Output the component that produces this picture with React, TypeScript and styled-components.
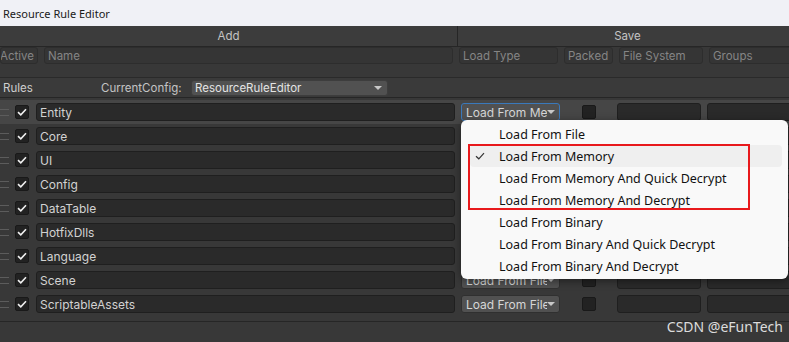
import React from 'react';
import styled, { createGlobalStyle } from 'styled-components';

const GlobalStyle = createGlobalStyle`
  html, body {
    margin: 0;
    padding: 0;
    background: #383838;
  }
`;

const Window = styled.div`
  width: 789px;
  height: 342px;
  display: flex;
  flex-direction: column;
  overflow: hidden;
  font-family: Inter, "Noto Sans", sans-serif;
`;

const TitleBar = styled.div`
  height: 26px;
  flex: none;
  display: flex;
  align-items: center;
  padding-left: 3px;
  background: #f0f1f6;
  color: #1a1a1a;
  font-family: "Noto Sans", "Liberation Sans", sans-serif;
  font-size: 11px;
`;

const Editor = styled.div`
  position: relative;
  flex: 1;
  display: flex;
  flex-direction: column;
  background: #383838;
  color: #c8c8c8;
  font-size: 11.5px;
`;

const GroupHeader = styled.div`
  height: 20px;
  flex: none;
  display: grid;
  grid-template-columns: 458px 1fr;
  background: #3c3c3c;
  border-bottom: 1px solid #262626;
`;

const GroupCell = styled.div<{ $divider?: boolean }>`
  display: flex;
  align-items: center;
  justify-content: center;
  color: #c4c4c4;
  border-right: ${(p) => (p.$divider ? '1px solid #262626' : 'none')};
  padding-left: ${(p) => (p.$divider ? '0' : '8px')};
`;

const ColumnHeader = styled.div`
  height: 17px;
  flex: none;
  display: grid;
  grid-template-columns: 38px 409px 99px 49px 84px 90px;
  column-gap: 6px;
`;

const ColumnLabel = styled.div<{ $right?: boolean }>`
  display: flex;
  align-items: center;
  justify-content: ${(p) => (p.$right ? 'flex-end' : 'flex-start')};
  padding: 0 3px;
  overflow: hidden;
  white-space: nowrap;
  background: #353535;
  border: 1px solid #2d2d2d;
  border-radius: 3px;
  color: #858585;
`;

const Band = styled.div`
  height: 13px;
  flex: none;
  border-bottom: 1px solid #2a2a2a;
`;

const RulesBar = styled.div`
  height: 19px;
  flex: none;
  display: flex;
  align-items: center;
  padding-left: 3px;
  background: #3a3a3a;
  border-bottom: 1px solid #262626;
`;

const RulesLabel = styled.span`
  width: 98px;
  color: #cfcfcf;
`;

const ConfigLabel = styled.span`
  width: 90px;
  color: #c4c4c4;
`;

const ConfigSelect = styled.div`
  width: 197px;
  height: 16px;
  box-sizing: border-box;
  display: flex;
  align-items: center;
  justify-content: space-between;
  padding: 0 5px 0 3px;
  background: #515151;
  border: 1px solid #3d3d3d;
  border-radius: 3px;
  color: #e4e4e4;
`;

const Arrow = styled.span`
  width: 0;
  height: 0;
  border-left: 4px solid transparent;
  border-right: 4px solid transparent;
  border-top: 4px solid #c8c8c8;
  flex: none;
`;

const List = styled.div`
  flex: none;
  padding: 2px 0 5px;
  border-bottom: 1px solid #262626;
`;

const Row = styled.div<{ $selected?: boolean }>`
  height: 24px;
  display: flex;
  align-items: center;
  background: ${(p) => (p.$selected ? '#464646' : 'transparent')};
`;

const Handle = styled.div`
  width: 9px;
  height: 5px;
  margin-right: 6px;
  border-top: 1px solid #5c5c5c;
  border-bottom: 1px solid #5c5c5c;
  flex: none;
`;

const Check = styled.div`
  width: 14px;
  height: 14px;
  box-sizing: border-box;
  border: 1px solid #191919;
  border-radius: 2px;
  background: #222222;
  display: flex;
  align-items: center;
  justify-content: center;
  flex: none;
`;

const CheckSlot = styled.div`
  width: 21px;
  flex: none;
`;

const Field = styled.div<{ $w: number }>`
  width: ${(p) => p.$w}px;
  height: 18px;
  box-sizing: border-box;
  flex: none;
  display: flex;
  align-items: center;
  padding: 0 3px;
  background: #2a2a2a;
  border: 1px solid #1f1f1f;
  border-radius: 3px;
  color: #d2d2d2;
  font-size: 12px;
`;

const Dropdown = styled.div<{ $focused?: boolean }>`
  width: 99px;
  height: 18px;
  margin-left: 6px;
  box-sizing: border-box;
  flex: none;
  display: flex;
  align-items: center;
  padding: 0 4px;
  background: #515151;
  border: 1px solid ${(p) => (p.$focused ? '#3a79bb' : '#303030')};
  border-radius: 3px;
  color: #d6d6d6;
  font-size: 12px;
`;

const DropText = styled.span`
  flex: 1;
  overflow: hidden;
  white-space: nowrap;
`;

const PackedCell = styled.div`
  width: 57px;
  flex: none;
  display: flex;
  justify-content: center;
`;

const GroupsField = styled(Field)`
  margin-left: 6px;
`;

const Popup = styled.div`
  position: absolute;
  left: 461px;
  top: 94px;
  width: 327px;
  height: 159px;
  box-sizing: border-box;
  padding: 3px 6px 3px 9px;
  background: #f9f9f9;
  border-radius: 6px;
  box-shadow: 0 2px 8px rgba(0, 0, 0, 0.45);
  font-family: "Noto Sans", "Liberation Sans", sans-serif;
  font-size: 12.5px;
  color: #111;
`;

const MenuItem = styled.div<{ $active?: boolean }>`
  height: 22px;
  display: flex;
  align-items: center;
  padding-left: 29px;
  position: relative;
  border-radius: 4px;
  background: ${(p) => (p.$active ? '#efefef' : 'transparent')};
`;

const Tick = styled.svg`
  position: absolute;
  left: 5px;
  top: 7px;
`;

const Highlight = styled.div`
  position: absolute;
  left: 7px;
  top: 24px;
  width: 282px;
  height: 66px;
  box-sizing: border-box;
  border: 2px solid #e8191c;
  pointer-events: none;
`;

const Watermark = styled.div`
  position: absolute;
  right: 6px;
  bottom: 6px;
  font-family: "Noto Sans", "Liberation Sans", sans-serif;
  font-size: 14px;
  color: #dcdcdc;
`;

const rules = [
  'Entity',
  'Core',
  'UI',
  'Config',
  'DataTable',
  'HotfixDlls',
  'Language',
  'Scene',
  'ScriptableAssets',
];

const loadTypes = [
  'Load From File',
  'Load From Memory',
  'Load From Memory And Quick Decrypt',
  'Load From Memory And Decrypt',
  'Load From Binary',
  'Load From Binary And Quick Decrypt',
  'Load From Binary And Decrypt',
];

const CheckMark = () => (
  <svg width="10" height="8" viewBox="0 0 10 8">
    <path d="M1 4.2 L3.8 6.8 L9 1.2" fill="none" stroke="#f0f0f0" strokeWidth="1.6" />
  </svg>
);

const App = () => {
  return (
    <Window>
      <GlobalStyle />
      <TitleBar>Resource Rule Editor</TitleBar>
      <Editor>
        <GroupHeader>
          <GroupCell $divider>Add</GroupCell>
          <GroupCell>Save</GroupCell>
        </GroupHeader>
        <ColumnHeader>
          <ColumnLabel $right>Active</ColumnLabel>
          <ColumnLabel>Name</ColumnLabel>
          <ColumnLabel>Load Type</ColumnLabel>
          <ColumnLabel>Packed</ColumnLabel>
          <ColumnLabel>File System</ColumnLabel>
          <ColumnLabel>Groups</ColumnLabel>
        </ColumnHeader>
        <Band />
        <RulesBar>
          <RulesLabel>Rules</RulesLabel>
          <ConfigLabel>CurrentConfig:</ConfigLabel>
          <ConfigSelect>
            ResourceRuleEditor
            <Arrow />
          </ConfigSelect>
        </RulesBar>
        <List>
          {rules.map((name, i) => (
            <Row key={name} $selected={i === 0}>
              <Handle />
              <CheckSlot>
                <Check>
                  <CheckMark />
                </Check>
              </CheckSlot>
              <Field $w={419}>{name}</Field>
              <Dropdown $focused={i === 0}>
                <DropText>{i === 0 ? 'Load From Me' : 'Load From File'}</DropText>
                <Arrow />
              </Dropdown>
              <PackedCell>
                <Check />
              </PackedCell>
              <Field $w={84} />
              <GroupsField $w={90} />
            </Row>
          ))}
        </List>
        <Popup>
          {loadTypes.map((t, i) => (
            <MenuItem key={t} $active={i === 1}>
              {i === 1 && (
                <Tick width="10" height="8" viewBox="0 0 10 8">
                  <path d="M1 4.2 L3.8 6.8 L9 1.2" fill="none" stroke="#333" strokeWidth="1.2" />
                </Tick>
              )}
              {t}
            </MenuItem>
          ))}
          <Highlight />
        </Popup>
        <Watermark>CSDN @eFunTech</Watermark>
      </Editor>
    </Window>
  );
};

export default App;
